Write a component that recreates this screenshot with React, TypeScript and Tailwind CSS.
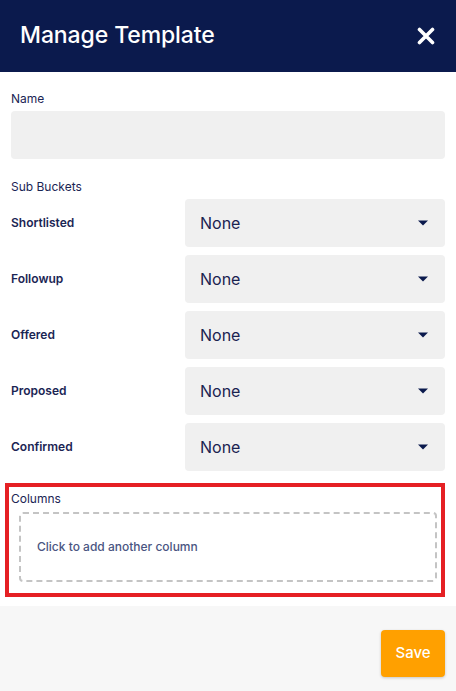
import React from "react";

const buckets = ["Shortlisted", "Followup", "Offered", "Proposed", "Confirmed"];

function Caret() {
  return (
    <svg width="10" height="6" viewBox="0 0 10 6" className="fill-[#0b1a4d]">
      <path d="M0 0.5h10L5 5.5z" />
    </svg>
  );
}

function CloseIcon() {
  return (
    <svg width="18" height="18" viewBox="0 0 18 18">
      <path d="M2.5 2.5L15.5 15.5M15.5 2.5L2.5 15.5" stroke="#fff" strokeWidth="3.6" strokeLinecap="round" />
    </svg>
  );
}

export default function App() {
  return (
    <div className="w-[456px] h-[691px] flex flex-col bg-white font-['Inter',sans-serif] text-[#1b2554]">
      <div className="h-[72px] shrink-0 bg-[#0b1a4d] flex items-center justify-between pl-[20px] pr-[21px]">
        <h1 className="text-[23px] leading-[28px] pb-[3px] font-medium text-white tracking-[-0.1px]">Manage Template</h1>
        <button className="w-[18px] h-[18px] flex items-center justify-center">
          <CloseIcon />
        </button>
      </div>

      <div className="px-[11px] pt-[19px] pb-[9px]">
        <label className="block text-[12px] leading-[16px]">Name</label>
        <div className="mt-[4px] h-[48px] rounded-[4px] bg-[#f0f0f0]" />

        <div className="mt-[20px] text-[12px] leading-[16px]">Sub Buckets</div>
        <div className="mt-[4px] flex flex-col gap-[8px]">
          {buckets.map((b) => (
            <div key={b} className="flex items-center">
              <span className="w-[174px] text-[12px] font-semibold">{b}</span>
              <div className="flex-1 h-[48px] rounded-[4px] bg-[#f0f0f0] flex items-center justify-between pl-[15px] pr-[17px]">
                <span className="text-[16px] text-[#1a2350]">None</span>
                <Caret />
              </div>
            </div>
          ))}
        </div>

        <div className="mt-[12px] ml-[-6px] border-4 border-[#e52024] pt-[4px] pb-[11px] pl-[2px] pr-[4px]">
          <div className="text-[12px] leading-[16px]">Columns</div>
          <div className="mt-[5px] ml-[8px] h-[70px] rounded-[4px] border-2 border-dashed border-[#c4c4c4] flex items-center pl-[16px]">
            <span className="text-[12px] font-medium text-[#4a5582]">Click to add another column</span>
          </div>
        </div>
      </div>

      <div className="flex-1 bg-[#f7f7f7] flex justify-end items-start pt-[24px] pr-[11px]">
        <button className="w-[64px] h-[47px] rounded-[4px] bg-[#ffa000] text-white text-[15px] font-medium shadow-[0_1px_3px_rgba(0,0,0,0.2)]">
          Save
        </button>
      </div>
    </div>
  );
}
